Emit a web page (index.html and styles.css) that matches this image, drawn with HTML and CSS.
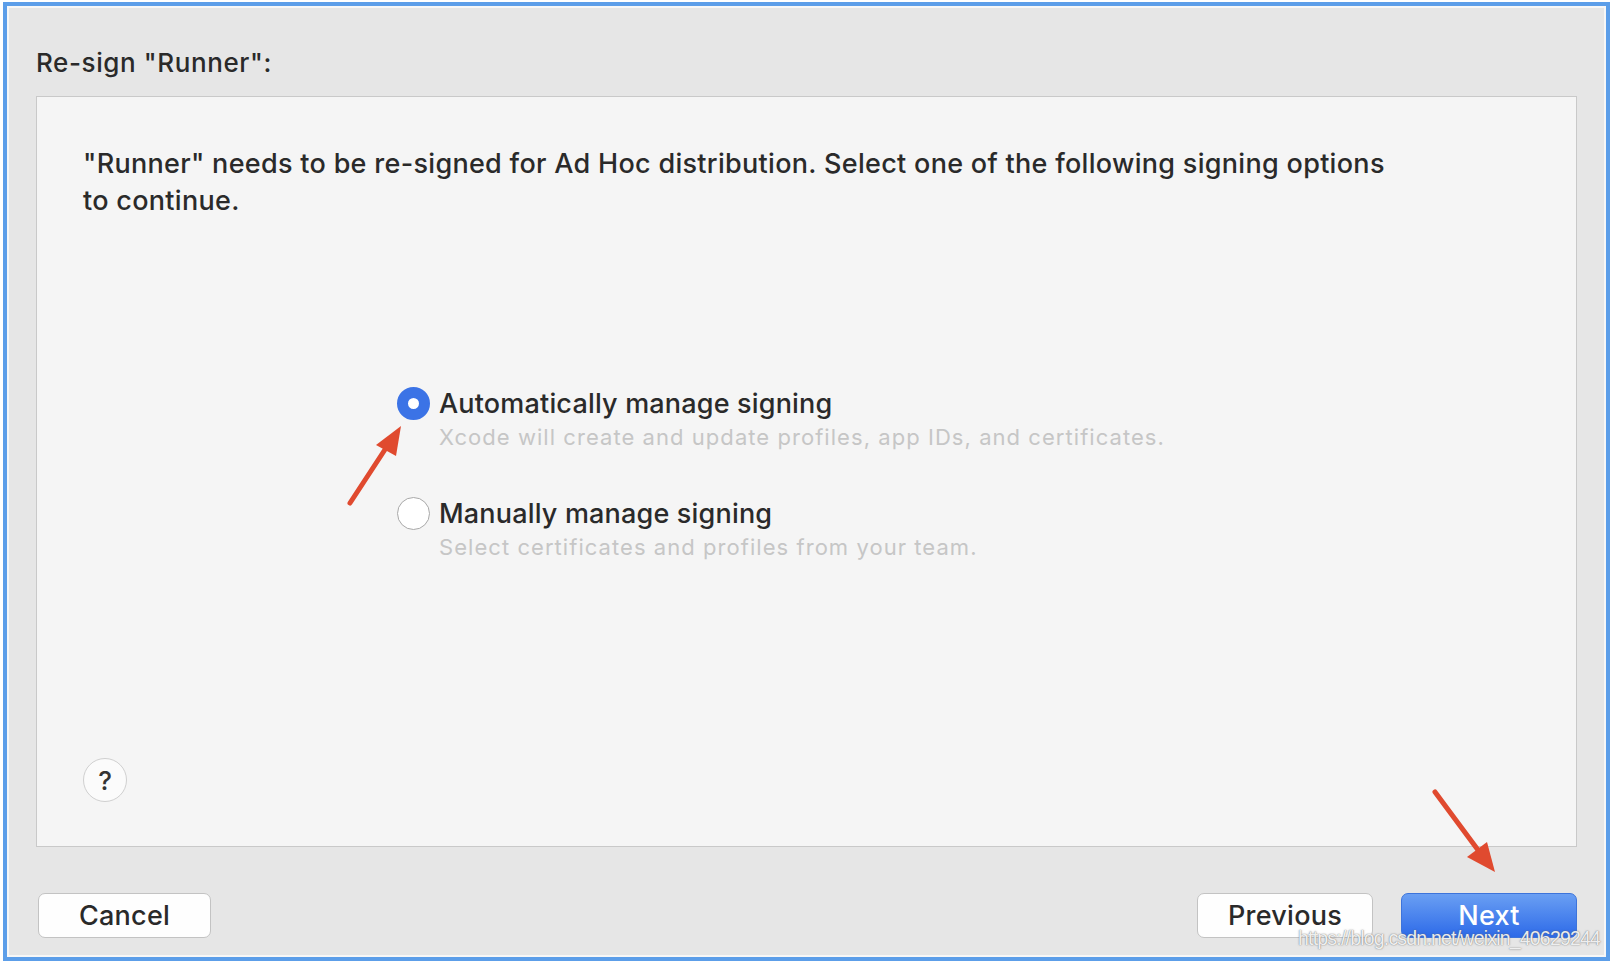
FILE: index.html
```html
<!DOCTYPE html>
<html>
<head>
<meta charset="utf-8">
<link rel="stylesheet" href="styles.css">
</head>
<body>
<div class="frame">
  <div class="window">
    <div class="title">Re-sign "Runner":</div>
    <div class="panel">
      <p class="intro">"Runner" needs to be re-signed for Ad Hoc distribution. Select one of the following signing options<br>to continue.</p>
      <div class="options">
        <div class="option">
          <div class="row"><span class="radio radio-on"></span><span class="label">Automatically manage signing</span></div>
          <div class="sub">Xcode will create and update profiles, app IDs, and certificates.</div>
        </div>
        <div class="option option-second">
          <div class="row"><span class="radio"></span><span class="label">Manually manage signing</span></div>
          <div class="sub">Select certificates and profiles from your team.</div>
        </div>
      </div>
      <div class="help">?</div>
    </div>
    <div class="footer">
      <button class="btn btn-cancel">Cancel</button>
      <div class="spacer"></div>
      <button class="btn">Previous</button>
      <button class="btn btn-primary">Next</button>
    </div>
  </div>
  <svg class="arrows" width="1612" height="964" viewBox="0 0 1612 964">
    <line x1="350" y1="503" x2="386" y2="448" stroke="#e04a2f" stroke-width="5" stroke-linecap="round"/>
    <polygon points="401,426 376,445 396,456" fill="#e04a2f"/>
    <line x1="1435" y1="792" x2="1478" y2="850" stroke="#e04a2f" stroke-width="5" stroke-linecap="round"/>
    <polygon points="1495,872 1467,857 1487,842" fill="#e04a2f"/>
  </svg>
  <div class="watermark">https://blog.csdn.net/weixin_40629244</div>
</div>
</body>
</html>
```

FILE: styles.css
```css
html, body {
  margin: 0;
  padding: 0;
  background: #ffffff;
}
body {
  font-family: Inter, "Liberation Sans", sans-serif;
  color: #262626;
}
.frame {
  position: relative;
  box-sizing: border-box;
  width: 1607px;
  height: 959px;
  margin: 2px 0 0 3px;
  border: 4px solid #5c9ee9;
}
.window {
  box-sizing: border-box;
  height: 100%;
  border: 2px solid #f7f7f7;
  background: #e6e6e6;
  padding: 40px 27px 0 27px;
  display: flex;
  flex-direction: column;
}
.title {
  font-size: 26px;
  font-weight: 500;
  letter-spacing: 0.6px;
  line-height: 30px;
  color: #2a2a2a;
}
.panel {
  box-sizing: border-box;
  margin-top: 18px;
  height: 751px;
  background: #f5f5f5;
  border: 1px solid #c9c9c9;
  padding: 48px 46px 44px 46px;
  display: flex;
  flex-direction: column;
}
.intro {
  margin: 0;
  font-size: 27px;
  font-weight: 500;
  letter-spacing: 0.3px;
  line-height: 37px;
  color: #2a2a2a;
}
.options {
  margin-top: 167px;
  padding-left: 314px;
}
.row {
  display: flex;
  align-items: center;
  height: 34px;
}
.radio {
  box-sizing: border-box;
  width: 33px;
  height: 33px;
  border-radius: 50%;
  border: 1.5px solid #a8a8a8;
  background: #ffffff;
  margin-right: 9px;
  flex: none;
}
.radio-on {
  border: 11px solid #3b73e6;
  background: #ffffff;
}
.label {
  font-size: 27px;
  font-weight: 500;
  letter-spacing: 0.18px;
  color: #2a2a2a;
}
.sub {
  margin-top: 4px;
  padding-left: 42px;
  font-size: 22px;
  letter-spacing: 1.05px;
  line-height: 26px;
  color: #c6c6c6;
}
.option-second {
  margin-top: 46px;
}
.help {
  margin-top: auto;
  box-sizing: border-box;
  width: 44px;
  height: 44px;
  border-radius: 50%;
  border: 1px solid #d0d0d0;
  background: #fbfbfb;
  display: flex;
  align-items: center;
  justify-content: center;
  font-size: 26px;
  font-weight: 500;
  color: #333;
}
.footer {
  margin-top: 46px;
  display: flex;
  align-items: center;
}
.spacer {
  flex: 1;
}
.btn {
  box-sizing: border-box;
  height: 45px;
  width: 176px;
  border: 1px solid #c3c3c3;
  border-radius: 7px;
  background: #fefefe;
  font-family: Inter, "Liberation Sans", sans-serif;
  font-size: 27px;
  font-weight: 500;
  letter-spacing: 0.25px;
  color: #2a2a2a;
  margin-left: 28px;
  padding: 0;
}
.btn-cancel {
  width: 173px;
  margin-left: 2px;
}
.btn-primary {
  border: 1px solid #3d74db;
  background: linear-gradient(#6a9ff3, #2d6ae8);
  color: #ffffff;
}
.arrows {
  position: absolute;
  left: -7px;
  top: -6px;
  pointer-events: none;
}
.watermark {
  position: absolute;
  left: 1291px;
  top: 921px;
  font-family: "Liberation Sans", sans-serif;
  font-size: 19.5px;
  letter-spacing: -0.8px;
  color: rgba(255,255,255,0.9);
  text-shadow: 0 0 1px rgba(90,90,90,0.8), 0 0 2px rgba(120,120,120,0.5);
}
```
